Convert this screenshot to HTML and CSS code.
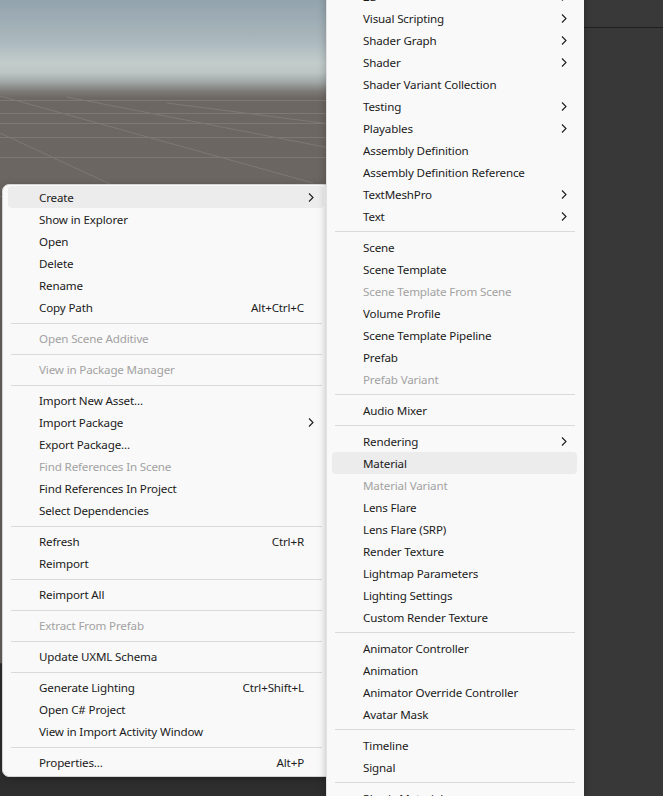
FILE: index.html
```html
<!DOCTYPE html>
<html>
<head>
<meta charset="utf-8">
<link rel="stylesheet" href="styles.css">
</head>
<body>
<div class="screen">
  <div class="editor">
    <div class="scene-area">
      <svg class="scene" width="584" height="663" viewBox="0 0 584 663">
        <defs>
          <linearGradient id="sky" x1="0" y1="0" x2="0" y2="663" gradientUnits="userSpaceOnUse">
            <stop offset="0" stop-color="#93a3ae"/>
            <stop offset="0.06" stop-color="#aab7bc"/>
            <stop offset="0.095" stop-color="#c2cccb"/>
            <stop offset="0.11" stop-color="#bcc5c4"/>
            <stop offset="0.125" stop-color="#9ea4a3"/>
            <stop offset="0.138" stop-color="#7c7976"/>
            <stop offset="0.148" stop-color="#6d6763"/>
            <stop offset="1" stop-color="#67615d"/>
          </linearGradient>
        </defs>
        <rect width="584" height="663" fill="url(#sky)"/>
        <g stroke="#8a8582" stroke-width="1" opacity="0.6">
          <line x1="0" y1="100.5" x2="584" y2="100.5"/>
          <line x1="0" y1="113.5" x2="584" y2="113.5"/>
          <line x1="0" y1="123.5" x2="584" y2="123.5"/>
          <line x1="0" y1="137.5" x2="584" y2="137.5"/>
          <line x1="0" y1="157.5" x2="584" y2="157.5"/>
          <line x1="0" y1="196.5" x2="584" y2="196.5"/>
          <line x1="0" y1="133" x2="110" y2="184"/>
          <line x1="0" y1="96" x2="313" y2="183"/>
          <line x1="67" y1="97" x2="330" y2="148"/>
          <line x1="167" y1="103" x2="330" y2="124"/>
        </g>
      </svg>
      <div class="bottom-panel"></div>
    </div>
    <div class="side-panel">
      <div class="side-head"></div>
    </div>
  </div>

  <div class="menu main-menu">
    <div class="item active"><span class="label">Create</span><svg class="arrow" width="6" height="9" viewBox="0 0 6 9"><path d="M1 0.5 L5 4.5 L1 8.5" fill="none" stroke="#1b1b1b" stroke-width="1.1"/></svg></div>
    <div class="item"><span class="label">Show in Explorer</span></div>
    <div class="item"><span class="label">Open</span></div>
    <div class="item"><span class="label">Delete</span></div>
    <div class="item"><span class="label">Rename</span></div>
    <div class="item"><span class="label">Copy Path</span><span class="shortcut">Alt+Ctrl+C</span></div>
    <div class="sep"></div>
    <div class="item disabled"><span class="label">Open Scene Additive</span></div>
    <div class="sep"></div>
    <div class="item disabled"><span class="label">View in Package Manager</span></div>
    <div class="sep"></div>
    <div class="item"><span class="label">Import New Asset...</span></div>
    <div class="item"><span class="label">Import Package</span><svg class="arrow" width="6" height="9" viewBox="0 0 6 9"><path d="M1 0.5 L5 4.5 L1 8.5" fill="none" stroke="#1b1b1b" stroke-width="1.1"/></svg></div>
    <div class="item"><span class="label">Export Package...</span></div>
    <div class="item disabled"><span class="label">Find References In Scene</span></div>
    <div class="item"><span class="label">Find References In Project</span></div>
    <div class="item"><span class="label">Select Dependencies</span></div>
    <div class="sep"></div>
    <div class="item"><span class="label">Refresh</span><span class="shortcut">Ctrl+R</span></div>
    <div class="item"><span class="label">Reimport</span></div>
    <div class="sep"></div>
    <div class="item"><span class="label">Reimport All</span></div>
    <div class="sep"></div>
    <div class="item disabled"><span class="label">Extract From Prefab</span></div>
    <div class="sep"></div>
    <div class="item"><span class="label">Update UXML Schema</span></div>
    <div class="sep"></div>
    <div class="item"><span class="label">Generate Lighting</span><span class="shortcut">Ctrl+Shift+L</span></div>
    <div class="item"><span class="label">Open C# Project</span></div>
    <div class="item"><span class="label">View in Import Activity Window</span></div>
    <div class="sep"></div>
    <div class="item"><span class="label">Properties...</span><span class="shortcut">Alt+P</span></div>
  </div>

  <div class="menu sub-menu">
    <div class="item"><span class="label">2D</span><svg class="arrow" width="6" height="9" viewBox="0 0 6 9"><path d="M1 0.5 L5 4.5 L1 8.5" fill="none" stroke="#1b1b1b" stroke-width="1.1"/></svg></div>
    <div class="item"><span class="label">Visual Scripting</span><svg class="arrow" width="6" height="9" viewBox="0 0 6 9"><path d="M1 0.5 L5 4.5 L1 8.5" fill="none" stroke="#1b1b1b" stroke-width="1.1"/></svg></div>
    <div class="item"><span class="label">Shader Graph</span><svg class="arrow" width="6" height="9" viewBox="0 0 6 9"><path d="M1 0.5 L5 4.5 L1 8.5" fill="none" stroke="#1b1b1b" stroke-width="1.1"/></svg></div>
    <div class="item"><span class="label">Shader</span><svg class="arrow" width="6" height="9" viewBox="0 0 6 9"><path d="M1 0.5 L5 4.5 L1 8.5" fill="none" stroke="#1b1b1b" stroke-width="1.1"/></svg></div>
    <div class="item"><span class="label">Shader Variant Collection</span></div>
    <div class="item"><span class="label">Testing</span><svg class="arrow" width="6" height="9" viewBox="0 0 6 9"><path d="M1 0.5 L5 4.5 L1 8.5" fill="none" stroke="#1b1b1b" stroke-width="1.1"/></svg></div>
    <div class="item"><span class="label">Playables</span><svg class="arrow" width="6" height="9" viewBox="0 0 6 9"><path d="M1 0.5 L5 4.5 L1 8.5" fill="none" stroke="#1b1b1b" stroke-width="1.1"/></svg></div>
    <div class="item"><span class="label">Assembly Definition</span></div>
    <div class="item"><span class="label">Assembly Definition Reference</span></div>
    <div class="item"><span class="label">TextMeshPro</span><svg class="arrow" width="6" height="9" viewBox="0 0 6 9"><path d="M1 0.5 L5 4.5 L1 8.5" fill="none" stroke="#1b1b1b" stroke-width="1.1"/></svg></div>
    <div class="item"><span class="label">Text</span><svg class="arrow" width="6" height="9" viewBox="0 0 6 9"><path d="M1 0.5 L5 4.5 L1 8.5" fill="none" stroke="#1b1b1b" stroke-width="1.1"/></svg></div>
    <div class="sep"></div>
    <div class="item"><span class="label">Scene</span></div>
    <div class="item"><span class="label">Scene Template</span></div>
    <div class="item disabled"><span class="label">Scene Template From Scene</span></div>
    <div class="item"><span class="label">Volume Profile</span></div>
    <div class="item"><span class="label">Scene Template Pipeline</span></div>
    <div class="item"><span class="label">Prefab</span></div>
    <div class="item disabled"><span class="label">Prefab Variant</span></div>
    <div class="sep"></div>
    <div class="item"><span class="label">Audio Mixer</span></div>
    <div class="sep"></div>
    <div class="item"><span class="label">Rendering</span><svg class="arrow" width="6" height="9" viewBox="0 0 6 9"><path d="M1 0.5 L5 4.5 L1 8.5" fill="none" stroke="#1b1b1b" stroke-width="1.1"/></svg></div>
    <div class="item active"><span class="label">Material</span></div>
    <div class="item disabled"><span class="label">Material Variant</span></div>
    <div class="item"><span class="label">Lens Flare</span></div>
    <div class="item"><span class="label">Lens Flare (SRP)</span></div>
    <div class="item"><span class="label">Render Texture</span></div>
    <div class="item"><span class="label">Lightmap Parameters</span></div>
    <div class="item"><span class="label">Lighting Settings</span></div>
    <div class="item"><span class="label">Custom Render Texture</span></div>
    <div class="sep"></div>
    <div class="item"><span class="label">Animator Controller</span></div>
    <div class="item"><span class="label">Animation</span></div>
    <div class="item"><span class="label">Animator Override Controller</span></div>
    <div class="item"><span class="label">Avatar Mask</span></div>
    <div class="sep"></div>
    <div class="item"><span class="label">Timeline</span></div>
    <div class="item"><span class="label">Signal</span></div>
    <div class="sep"></div>
    <div class="item"><span class="label">Physic Material</span></div>
  </div>
</div>
</body>
</html>
```

FILE: styles.css
```css
* { box-sizing: border-box; }

html, body {
  margin: 0;
  padding: 0;
  width: 663px;
  height: 796px;
  overflow: hidden;
  background: #2f2f2f;
}

.screen {
  position: relative;
  width: 663px;
  height: 796px;
  overflow: hidden;
  font-family: "Noto Sans", "Open Sans", sans-serif;
  font-size: 11.6px;
  letter-spacing: -0.15px;
  color: #1b1b1b;
}

.editor {
  display: flex;
  width: 663px;
  height: 796px;
}

.scene-area {
  width: 584px;
  display: flex;
  flex-direction: column;
}

.scene {
  display: block;
  flex: none;
}

.bottom-panel {
  flex: 1;
  background: #2e2e2e;
  border-top: 1px solid #3c3c3c;
}

.side-panel {
  flex: 1;
  background: #383838;
}

.side-head {
  height: 28px;
  border-bottom: 1px solid #1f1f1f;
  background: #393939;
}

.menu {
  position: absolute;
  background: #f9f9f9;
  display: flex;
  flex-direction: column;
}

.main-menu {
  left: 2px;
  top: 184px;
  width: 330px;
  padding: 1px 7px 3px 5px;
  border: 1px solid #d4d4d4;
  border-radius: 7px;
  box-shadow: 0 2px 8px rgba(0, 0, 0, 0.25);
}

.sub-menu {
  left: 326px;
  top: -17px;
  width: 258px;
  padding: 2px 7px 3px 5px;
  border-left: 1px solid #e2e2e2;
  box-shadow: 0 2px 8px rgba(0, 0, 0, 0.25);
}

.item {
  height: 22px;
  display: flex;
  align-items: center;
  padding-left: 31px;
  padding-right: 10px;
  border-radius: 4px;
  white-space: nowrap;
}

.item.active {
  background: #ececec;
}

.item.disabled {
  color: #a2a2a2;
}

.label {
  flex: 1;
}

.shortcut {
  padding-right: 10px;
}

.arrow {
  display: block;
}

.sep {
  height: 1px;
  margin: 5px 2px 3px 3px;
  background: #dadada;
}

.sub-menu .sep {
  margin: 4px 2px 4px 3px;
}
```
